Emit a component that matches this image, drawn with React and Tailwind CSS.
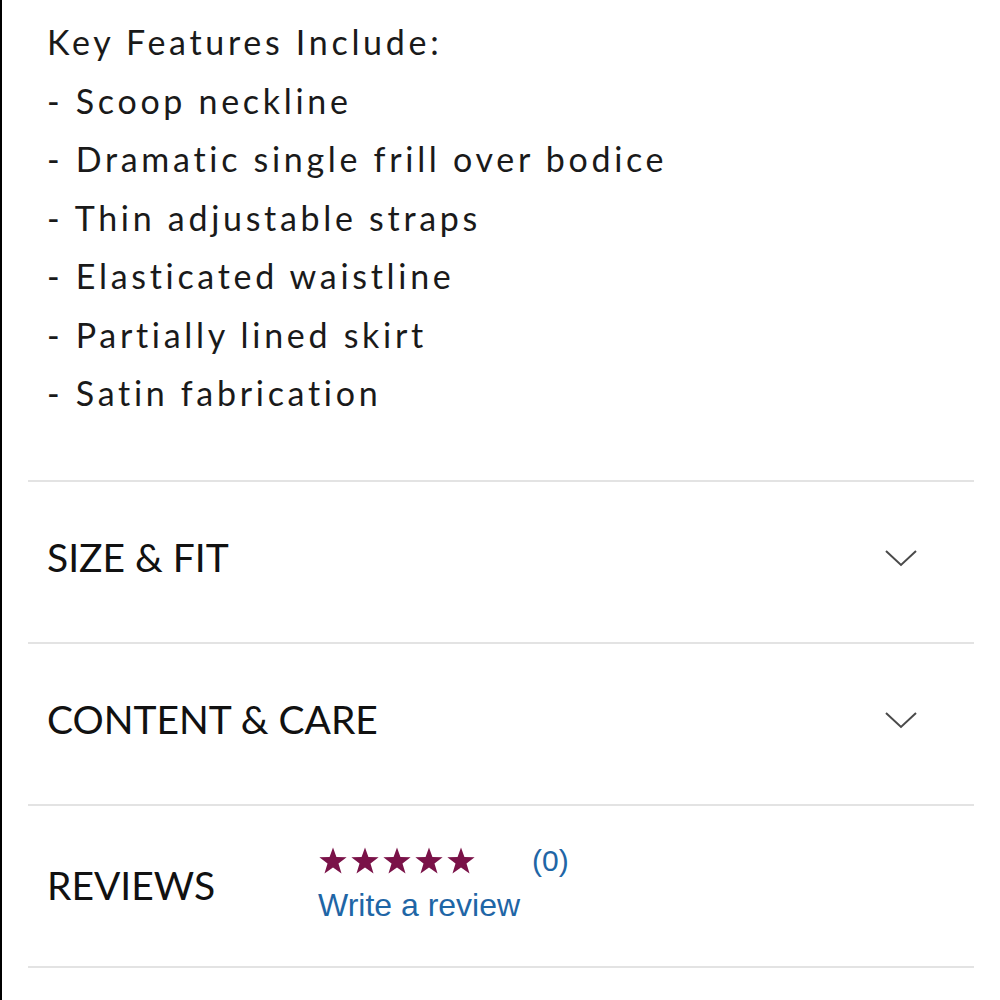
const features = [
  'Key Features Include:',
  '- Scoop neckline',
  '- Dramatic single frill over bodice',
  '- Thin adjustable straps',
  '- Elasticated waistline',
  '- Partially lined skirt',
  '- Satin fabrication',
];

const Chevron = () => (
  <svg width="34" height="20" viewBox="0 0 34 20" fill="none" className="mr-[82px]">
    <path d="M2 3 L17 17 L32 3" stroke="#4a4a4a" strokeWidth="2" />
  </svg>
);

const Star = () => (
  <svg width="30" height="28" viewBox="0 0 24 23" fill="#7a1248">
    <path d="M12 0.5 L14.8 8.3 L23.2 8.5 L16.5 13.6 L19 21.7 L12 16.9 L5 21.7 L7.5 13.6 L0.8 8.5 L9.2 8.3 Z" />
  </svg>
);

const Divider = () => <div className="mx-[26px] h-[2px] bg-[#e3e3e3]" />;

const Section = ({ title }) => (
  <div className="flex h-[160px] items-center justify-between pb-[8px] pl-[45px]">
    <span className="text-[39px] text-[#111]" style={{ fontFamily: 'Lato, sans-serif' }}>{title}</span>
    <Chevron />
  </div>
);

export default function App() {
  return (
    <div className="min-h-[1000px] w-[1000px] border-l-2 border-black bg-white">
      <div className="pt-[13px] pb-[57px] pl-[45px]" style={{ fontFamily: 'Lato, sans-serif' }}>
        {features.map((f) => (
          <div key={f} className="text-[34px] leading-[58.5px] tracking-[3.7px] text-[#1a1a1a]">
            {f}
          </div>
        ))}
      </div>
      <Divider />
      <Section title="SIZE & FIT" />
      <Divider />
      <Section title="CONTENT & CARE" />
      <Divider />
      <div className="flex h-[160px] items-center pl-[45px]">
        <span className="w-[271px] text-[39px] text-[#111]" style={{ fontFamily: 'Lato, sans-serif' }}>REVIEWS</span>
        <div className="-mt-[2px] flex flex-col" style={{ fontFamily: '"Liberation Sans", Arial, sans-serif' }}>
          <div className="flex items-center">
            <div className="flex gap-[2px]">
              <Star /><Star /><Star /><Star /><Star />
            </div>
            <span className="ml-[56px] text-[30px] leading-none text-[#1f66a6]">(0)</span>
          </div>
          <span className="mt-[11px] text-[32px] leading-[36px] text-[#1f66a6]">Write a review</span>
        </div>
      </div>
      <Divider />
    </div>
  );
}
